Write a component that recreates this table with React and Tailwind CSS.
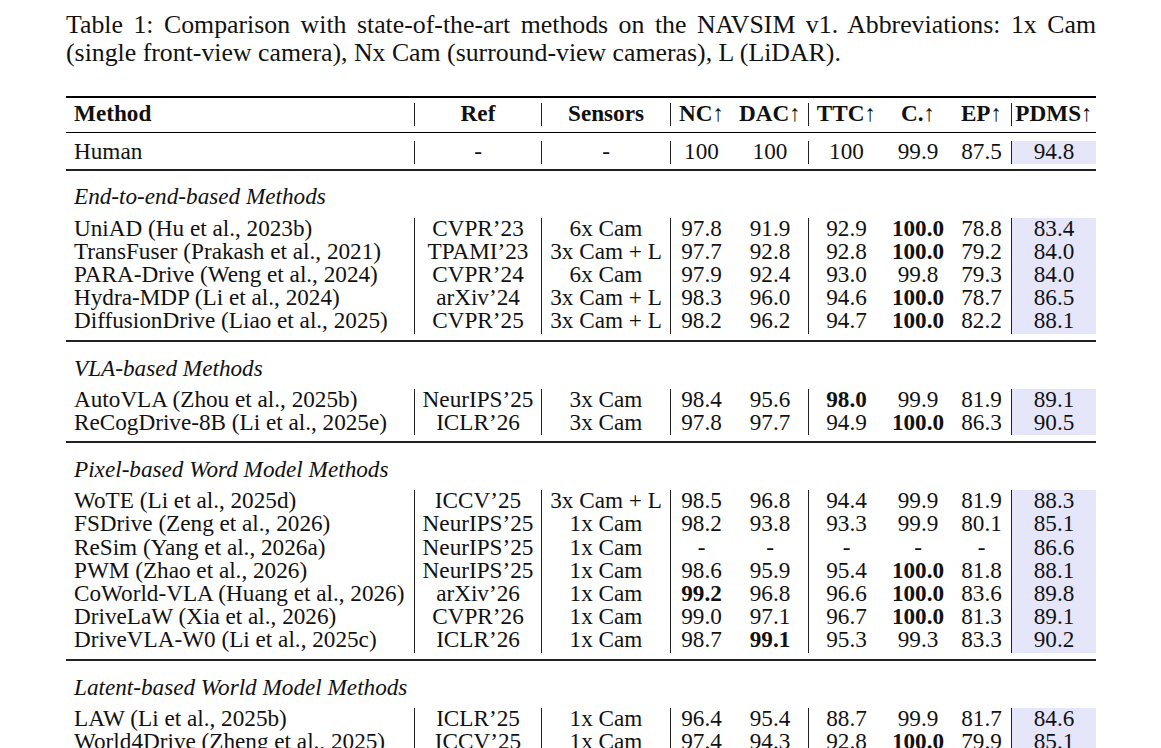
const cols = 'grid grid-cols-[348px_127px_129px_62px_76px_76px_68px_59px_85px]'
const bar = 'border-l border-[#222]'

const groups = [
  {
    title: 'End-to-end-based Methods',
    top: 'mt-[15px]',
    rows: [
      ['UniAD (Hu et al., 2023b)', 'CVPR’23', '6x Cam', '97.8', '91.9', '92.9', '*100.0', '78.8', '83.4'],
      ['TransFuser (Prakash et al., 2021)', 'TPAMI’23', '3x Cam + L', '97.7', '92.8', '92.8', '*100.0', '79.2', '84.0'],
      ['PARA-Drive (Weng et al., 2024)', 'CVPR’24', '6x Cam', '97.9', '92.4', '93.0', '99.8', '79.3', '84.0'],
      ['Hydra-MDP (Li et al., 2024)', 'arXiv’24', '3x Cam + L', '98.3', '96.0', '94.6', '*100.0', '78.7', '86.5'],
      ['DiffusionDrive (Liao et al., 2025)', 'CVPR’25', '3x Cam + L', '98.2', '96.2', '94.7', '*100.0', '82.2', '88.1'],
    ],
  },
  {
    title: 'VLA-based Methods',
    top: 'mt-[16px]',
    rows: [
      ['AutoVLA (Zhou et al., 2025b)', 'NeurIPS’25', '3x Cam', '98.4', '95.6', '*98.0', '99.9', '81.9', '89.1'],
      ['ReCogDrive-8B (Li et al., 2025e)', 'ICLR’26', '3x Cam', '97.8', '97.7', '94.9', '*100.0', '86.3', '90.5'],
    ],
  },
  {
    title: 'Pixel-based Word Model Methods',
    top: 'mt-[16px]',
    rows: [
      ['WoTE (Li et al., 2025d)', 'ICCV’25', '3x Cam + L', '98.5', '96.8', '94.4', '99.9', '81.9', '88.3'],
      ['FSDrive (Zeng et al., 2026)', 'NeurIPS’25', '1x Cam', '98.2', '93.8', '93.3', '99.9', '80.1', '85.1'],
      ['ReSim (Yang et al., 2026a)', 'NeurIPS’25', '1x Cam', '-', '-', '-', '-', '-', '86.6'],
      ['PWM (Zhao et al., 2026)', 'NeurIPS’25', '1x Cam', '98.6', '95.9', '95.4', '*100.0', '81.8', '88.1'],
      ['CoWorld-VLA (Huang et al., 2026)', 'arXiv’26', '1x Cam', '*99.2', '96.8', '96.6', '*100.0', '83.6', '89.8'],
      ['DriveLaW (Xia et al., 2026)', 'CVPR’26', '1x Cam', '99.0', '97.1', '96.7', '*100.0', '81.3', '89.1'],
      ['DriveVLA-W0 (Li et al., 2025c)', 'ICLR’26', '1x Cam', '98.7', '*99.1', '95.3', '99.3', '83.3', '90.2'],
    ],
  },
  {
    title: 'Latent-based World Model Methods',
    top: 'mt-[16px]',
    rows: [
      ['LAW (Li et al., 2025b)', 'ICLR’25', '1x Cam', '96.4', '95.4', '88.7', '99.9', '81.7', '84.6'],
      ['World4Drive (Zheng et al., 2025)', 'ICCV’25', '1x Cam', '97.4', '94.3', '92.8', '*100.0', '79.9', '85.1'],
    ],
  },
]

// which cells carry a vertical rule on their left edge
const barAt = [false, true, true, true, false, true, false, false, true]

function Cell({ value, i, header, shade }) {
  const bold = header || value.startsWith('*')
  const text = value.replace(/^\*/, '')
  const arrow = header && text.endsWith('↑')
  return (
    <div
      className={
        'h-[23.2px] leading-[20px] whitespace-nowrap ' +
        (i === 0 ? 'pl-[8px] text-left ' : 'text-center ') +
        (barAt[i] ? bar + ' ' : '') +
        (shade && i === 8 ? 'bg-[#e6e6fa] ' : '') +
        (bold ? 'font-bold' : '')
      }
    >
      {arrow ? (
        <>
          {text.slice(0, -1)}
          <span className="font-normal">↑</span>
        </>
      ) : (
        text
      )}
    </div>
  )
}

function Row({ cells, header, className = '' }) {
  return (
    <div className={cols + ' ' + className}>
      {cells.map((c, i) => (
        <Cell key={i} value={c} i={i} header={header} shade={!header} />
      ))}
    </div>
  )
}

export default function App() {
  return (
    <div className="w-[1161px] h-[748px] overflow-hidden bg-white pl-[66px] pt-[11px] text-[#111] font-['Liberation_Serif','Times_New_Roman',serif]">
      <div className="w-[1030px] text-[25.8px] leading-[28px]">
        <div className="text-justify [text-align-last:justify] whitespace-nowrap">
          Table 1: Comparison with state-of-the-art methods on the NAVSIM v1. Abbreviations: 1x Cam
        </div>
        <div>(single front-view camera), Nx Cam (surround-view cameras), L (LiDAR).</div>
      </div>

      <div className="w-[1030px] mt-[29px] text-[23.2px]">
        <div className="h-[2px] bg-black" />
        <Row
          header
          className="mt-[5px]"
          cells={['Method', 'Ref', 'Sensors', 'NC↑', 'DAC↑', 'TTC↑', 'C.↑', 'EP↑', 'PDMS↑']}
        />
        <div className="mt-[6px] h-[1px] bg-black" />
        <Row className="mt-[8px]" cells={['Human', '-', '-', '100', '100', '100', '99.9', '87.5', '94.8']} />
        <div className="mt-[5px] h-[2px] bg-[#222]" />

        {groups.map((g) => (
          <div key={g.title}>
            <div className={g.top + ' h-[23.2px] leading-[20px] pl-[8px] italic'}>{g.title}</div>
            <div className="mt-[8px]">
              {g.rows.map((r) => (
                <Row key={r[0]} cells={r} />
              ))}
            </div>
            <div className="mt-[6px] h-[2px] bg-[#222]" />
          </div>
        ))}
      </div>
    </div>
  )
}
